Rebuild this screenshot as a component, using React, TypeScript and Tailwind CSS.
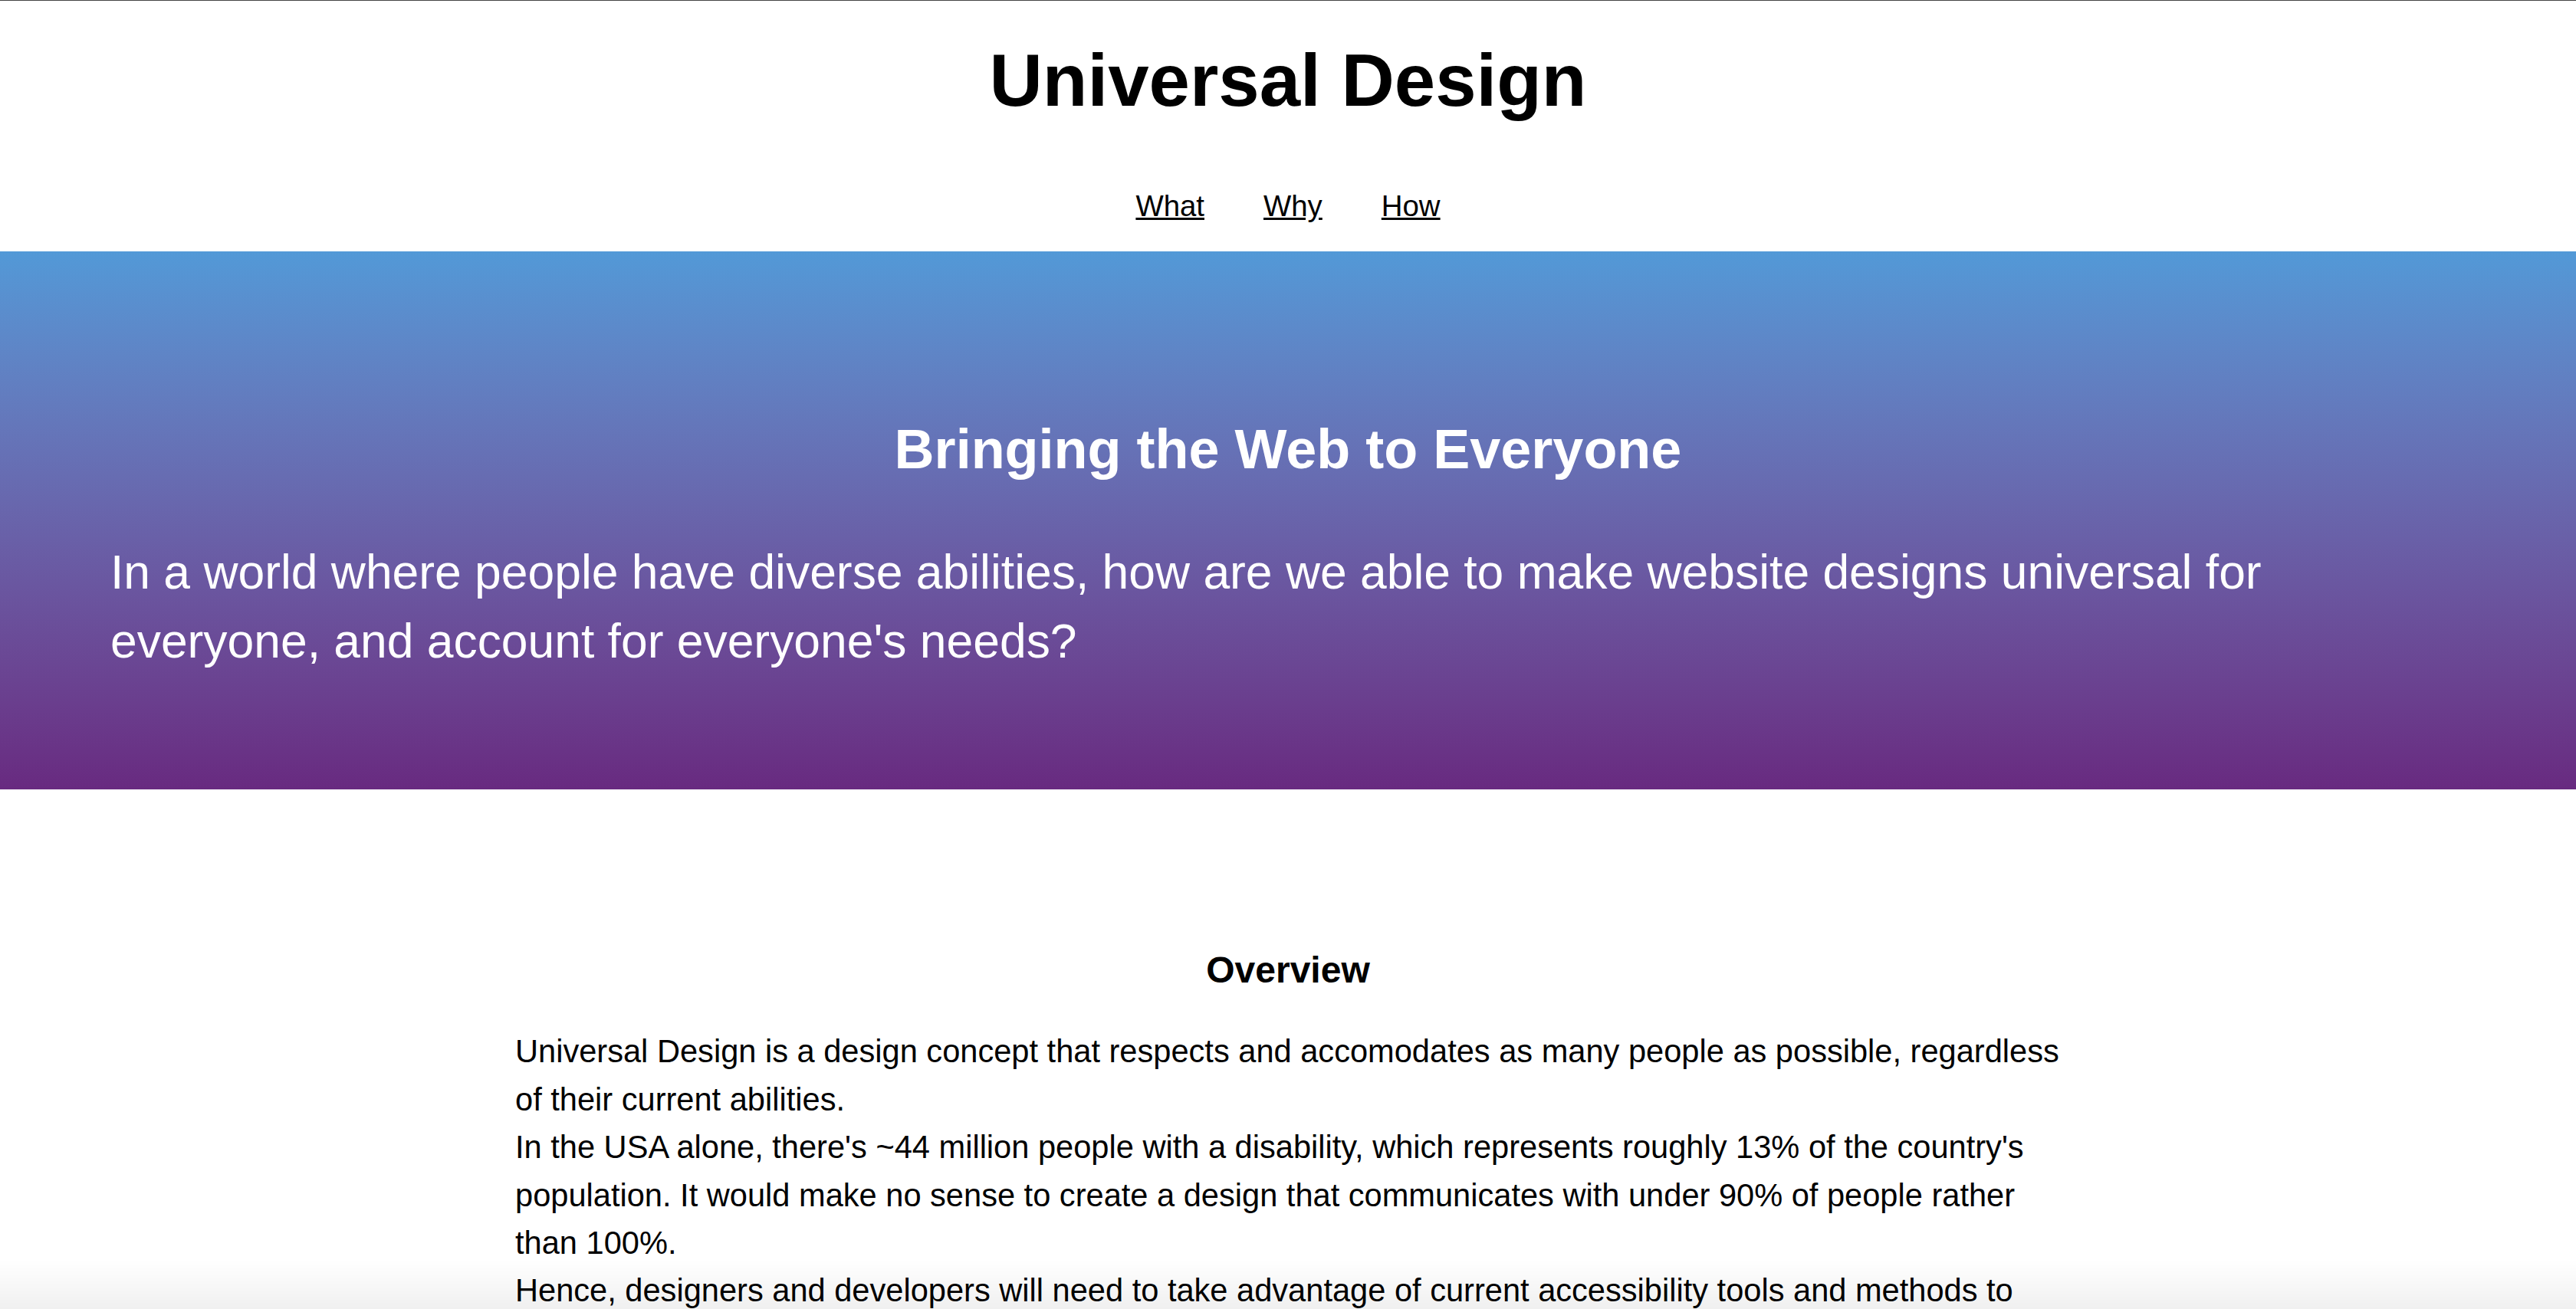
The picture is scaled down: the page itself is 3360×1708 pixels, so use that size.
import React from "react";

const navLinks = ["What", "Why", "How"];

function Header() {
  return (
    <header className="border-t border-[#444444] bg-white pt-[56px] pb-[40px] text-center">
      <h1 className="text-[96px] font-bold leading-[96px] text-black">Universal Design</h1>
      <nav className="mt-[97px] flex justify-center gap-[77px]">
        {navLinks.map((link) => (
          <a key={link} href={`#${link.toLowerCase()}`} className="text-[38.4px] leading-[38.4px] text-black underline">
            {link}
          </a>
        ))}
      </nav>
    </header>
  );
}

function Hero() {
  return (
    <section className="bg-gradient-to-b from-[#5299d7] to-[#682a80] px-[144px] pt-[222px] pb-[148px] text-white">
      <h2 className="text-center text-[72px] font-bold leading-[72px]">Bringing the Web to Everyone</h2>
      <p className="mt-[80px] text-[62.4px] leading-[90px]">
        In a world where people have diverse abilities, how are we able to make website designs universal for
        everyone, and account for everyone's needs?
      </p>
    </section>
  );
}

function Overview() {
  return (
    <section id="what" className="mx-auto w-[2016px] pt-[212px] pb-[120px] text-black">
      <h3 className="text-center text-[48px] font-bold leading-[48px]">Overview</h3>
      <div className="mt-[51px] w-[2030px] text-[41.6px] leading-[62.4px]">
        <p>
          Universal Design is a design concept that respects and accomodates as many people as possible, regardless
          of their current abilities.
        </p>
        <p>
          In the USA alone, there's ~44 million people with a disability, which represents roughly 13% of the country's
          population. It would make no sense to create a design that communicates with under 90% of people rather
          than 100%.
        </p>
        <p>
          Hence, designers and developers will need to take advantage of current accessibility tools and methods to
          build websites that everyone can perceive, understand, navigate and interact with.
        </p>
      </div>
    </section>
  );
}

export default function App() {
  return (
    <div className="min-h-screen bg-white" style={{ fontFamily: '"Liberation Sans", Arial, Helvetica, sans-serif' }}>
      <Header />
      <Hero />
      <Overview />
      {/* soft shade at the bottom edge of the window */}
      <div className="pointer-events-none fixed inset-x-0 bottom-0 h-[64px] bg-gradient-to-b from-transparent to-black/[0.06]" />
    </div>
  );
}
